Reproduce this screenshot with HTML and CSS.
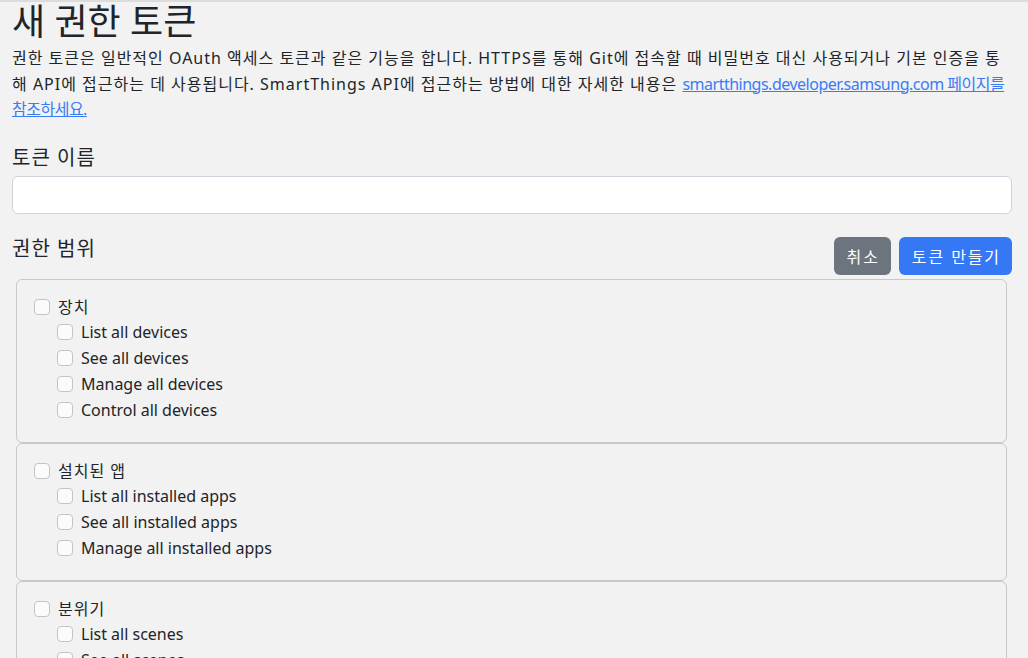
FILE: index.html
```html
<!DOCTYPE html>
<html lang="ko">
<head>
    <meta charset="UTF-8">
    <meta name="viewport" content="width=device-width, initial-scale=1.0">
    <title>새 권한 토큰</title>
    <link rel="stylesheet" href="styles.css">
</head>
<body>
    <div class="page">
        <h1>새 권한 토큰</h1>
        <p class="intro">권한 토큰은 일반적인 OAuth 액세스 토큰과 같은 기능을 합니다. HTTPS를 통해 Git에 접속할 때 비밀번호 대신 사용되거나 기본 인증을 통해 API에 접근하는 데 사용됩니다. SmartThings API에 접근하는 방법에 대한 자세한 내용은 <a href="#">smartthings.developer.samsung.com 페이지를 참조하세요.</a></p>

        <label class="section-label" for="token-name">토큰 이름</label>
        <input type="text" id="token-name" class="text-input">

        <div class="scope-header">
            <div class="section-label">권한 범위</div>
            <div class="actions">
                <button class="btn btn-cancel">취소</button>
                <button class="btn btn-create">토큰 만들기</button>
            </div>
        </div>

        <div class="scope-list">
            <div class="scope-card">
                <label class="check group"><input type="checkbox"> 장치</label>
                <div class="sub-list">
                    <label class="check"><input type="checkbox"> List all devices</label>
                    <label class="check"><input type="checkbox"> See all devices</label>
                    <label class="check"><input type="checkbox"> Manage all devices</label>
                    <label class="check"><input type="checkbox"> Control all devices</label>
                </div>
            </div>
            <div class="scope-card">
                <label class="check group"><input type="checkbox"> 설치된 앱</label>
                <div class="sub-list">
                    <label class="check"><input type="checkbox"> List all installed apps</label>
                    <label class="check"><input type="checkbox"> See all installed apps</label>
                    <label class="check"><input type="checkbox"> Manage all installed apps</label>
                </div>
            </div>
            <div class="scope-card">
                <label class="check group"><input type="checkbox"> 분위기</label>
                <div class="sub-list">
                    <label class="check"><input type="checkbox"> List all scenes</label>
                    <label class="check"><input type="checkbox"> See all scenes</label>
                    <label class="check"><input type="checkbox"> Execute all scenes</label>
                </div>
            </div>
        </div>
    </div>
</body>
</html>
```

FILE: styles.css
```css
body {
    margin: 0;
    background-color: #f2f2f2;
    color: #212529;
    font-family: "Noto Sans", "Noto Sans CJK KR", sans-serif;
    font-size: 16px;
    border-top: 2px solid #dcdcdc;
}

.page {
    padding: 0 16px 0 12px;
}

h1 {
    font-size: 36px;
    font-weight: 400;
    line-height: 40px;
    margin: 0;
}

.intro {
    margin: 4px 0 0;
    line-height: 25.5px;
    letter-spacing: 1px;
}

.intro a {
    color: #3b7cf6;
    letter-spacing: -0.5px;
}

.section-label {
    display: block;
    font-size: 20px;
    line-height: 24px;
    letter-spacing: 1px;
    margin-top: 23px;
}

.text-input {
    display: block;
    box-sizing: border-box;
    width: 100%;
    height: 38px;
    margin-top: 6px;
    border: 1px solid #ced4da;
    border-radius: 6px;
    background: #fff;
}

.scope-header {
    display: flex;
    justify-content: space-between;
    align-items: flex-start;
    margin-top: 23px;
}

.scope-header .section-label {
    margin-top: 0;
}

.actions {
    display: flex;
    gap: 8px;
}

.btn {
    height: 38px;
    padding: 0 11px 0 13px;
    border: none;
    border-radius: 6px;
    color: #fff;
    font-family: inherit;
    font-size: 16px;
    letter-spacing: 1.9px;
    cursor: pointer;
}

.btn-cancel {
    background-color: #6c757d;
}

.btn-create {
    background-color: #3478f6;
}

.scope-list {
    margin: 4px 5px 0 4px;
}

.scope-card {
    border: 1px solid #c8c8c8;
    border-radius: 6px;
    padding: 14px 17px 19px;
}

.check {
    display: flex;
    align-items: center;
    gap: 8px;
    line-height: 26px;
}

.check.group {
    letter-spacing: 1px;
}

.sub-list {
    margin-top: -1px;
    padding-left: 23px;
}

.check input {
    appearance: none;
    width: 16px;
    height: 16px;
    margin: 0;
    border: 1px solid #c4c4c4;
    border-radius: 4px;
    background: #fbfbfb;
}
```
